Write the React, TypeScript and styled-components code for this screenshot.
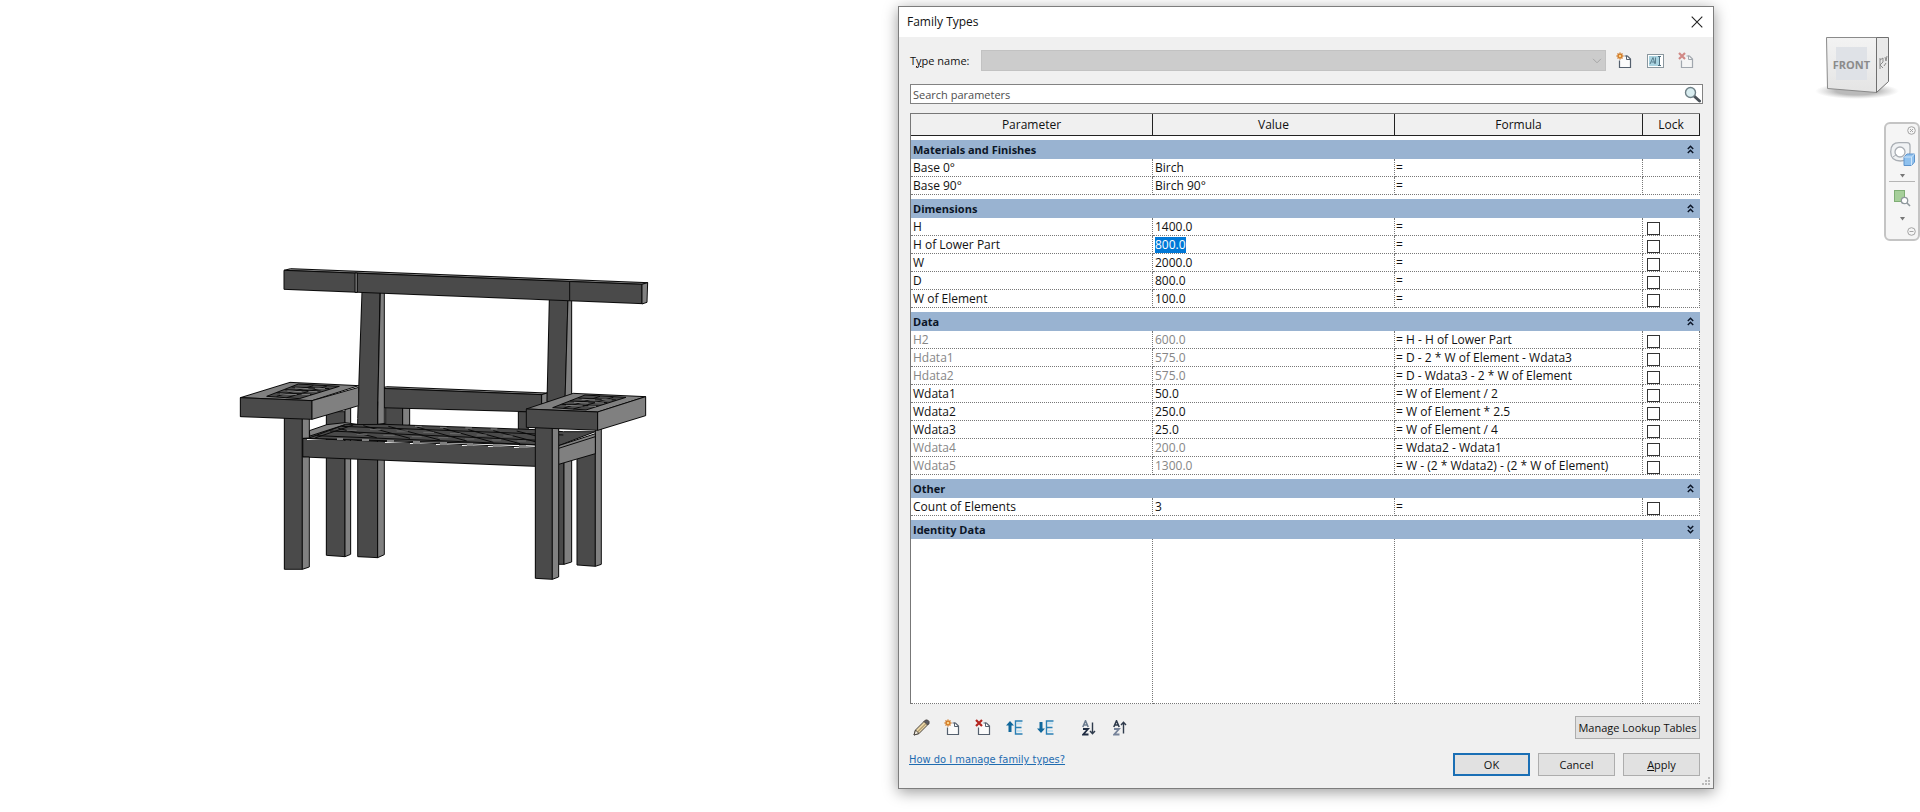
import React, { useEffect, useRef, useState } from "react";
import styled, { createGlobalStyle, css } from "styled-components";

const GlobalStyle = createGlobalStyle`
  *, *::before, *::after { box-sizing: border-box; }
  body {
    margin: 0;
    background: #fff;
    color: #111;
    font-family: "Open Sans", "Noto Sans", sans-serif;
    font-size: 12px;
    line-height: 16px;
  }
  button, input, select { font: inherit; color: inherit; }
`;

const Workspace = styled.main`
  display: grid;
  grid-template-columns: minmax(0, 1fr) minmax(600px, 816px) 206px;
  min-height: 100vh;
  overflow: hidden;
`;

const ModelView = styled.section`
  display: flex;
  align-items: center;
  justify-content: center;
`;

const ModelDrawing = styled.svg`
  flex: none;
  width: 430px;
  max-width: 100%;
`;

const Dialog = styled.section`
  align-self: start;
  display: flex;
  flex-direction: column;
  margin-top: 6px;
  border: 1px solid #7d7d7d;
  background: #f0f0f0;
  box-shadow: 0 3px 14px rgba(0, 0, 0, 0.4);
`;

const TitleBar = styled.header`
  display: flex;
  align-items: center;
  justify-content: space-between;
  height: 30px;
  padding: 0 6px 0 8px;
  background: #fff;
`;

const Title = styled.h1`
  margin: 0;
  font-size: 12px;
  font-weight: 400;
`;

const IconButton = styled.button`
  display: inline-flex;
  align-items: center;
  justify-content: center;
  width: 20px;
  height: 20px;
  padding: 0;
  border: 0;
  background: none;
`;

const TypeRow = styled.div`
  display: flex;
  align-items: center;
  gap: 8px;
  height: 21px;
  margin: 13px 17px 0 11px;
`;

const TypeLabel = styled.label`
  flex: none;
  width: 63px;
  font-size: 11px;
  white-space: nowrap;
`;

const TypeTools = styled.div`
  display: flex;
  gap: 11px;
`;

const TypeSelect = styled.div`
  position: relative;
  flex: 1;
  height: 21px;

  select {
    display: block;
    width: 100%;
    height: 100%;
    appearance: none;
    border: 1px solid #c2c2c2;
    border-radius: 0;
    background: #ccc;
    opacity: 1;
  }
  svg {
    position: absolute;
    top: 8px;
    right: 4px;
    pointer-events: none;
  }
`;

const SearchBox = styled.div`
  display: flex;
  align-items: center;
  height: 20px;
  margin: 13px 10px 0 11px;
  border: 1px solid #828282;
  background: #fff;

  input {
    flex: 1;
    height: 18px;
    padding: 0 2px;
    border: 0;
    outline: 0;
    background: none;
    font-size: 11px;
  }
  input::placeholder { color: #4e4e4e; opacity: 1; }
`;

const GridFrame = styled.div`
  margin: 9px 13px 0 11px;
  border: 1px solid #777;
  border-width: 1px 0 0 1px;
  background: #fff;
`;

const Grid = styled.table`
  width: 100%;
  table-layout: fixed;
  border-collapse: separate;
  border-spacing: 0;
`;

const ValueCol = styled.col``;
const FormulaCol = styled.col`width: 248px;`;
const LockCol = styled.col`width: 57px;`;

const HeadCell = styled.th`
  height: 22px;
  padding: 0;
  border-right: 1px solid #222;
  border-bottom: 1px solid #222;
  background: #f0f0f0;
  font-weight: 400;
  text-align: center;
`;

const GroupCell = styled.th`
  height: 23px;
  padding: 0;
  border-top: 4px solid #fff;
  background: #99b3d1;
  text-align: left;
`;

const GroupBar = styled.div`
  display: flex;
  align-items: center;
  justify-content: space-between;
  height: 19px;
  padding: 0 0 0 2px;
  color: #0b1526;
  font-size: 11px;
  font-weight: 700;
  line-height: 16px;
`;

const dots = "1px dotted #777";

const Cell = styled.td<{ $muted?: boolean }>`
  height: 18px;
  padding: 0 0 0 2px;
  border-right: ${dots};
  border-bottom: ${dots};
  line-height: 16px;
  white-space: nowrap;
  overflow: hidden;
  color: ${(p) => (p.$muted ? "#868686" : "inherit")};
`;

const FormulaCell = styled(Cell)`
  padding-left: 1px;
`;

const LockCell = styled(Cell)`
  padding: 3px 0 0 4px;
`;

const FillCell = styled(Cell)`
  height: 165px;
`;

const ValueInput = styled.input<{ $muted?: boolean }>`
  display: block;
  width: 100%;
  height: 16px;
  margin: 0;
  padding: 0;
  border: 0;
  outline: 0;
  background: none;
  color: ${(p) => (p.$muted ? "#868686" : "inherit")};
  caret-color: transparent;

  &::selection { background: #0078d7; color: #fff; }
`;

const LockBox = styled.input`
  display: block;
  appearance: none;
  width: 13px;
  height: 13px;
  margin: 0;
  border: 1px solid #333;
  background: #fff;
`;

const Footer = styled.footer`
  display: grid;
  grid-template-columns: 1fr auto;
  row-gap: 14px;
  padding: 12px 13px 12px 10px;
`;

const Toolbar = styled.div`
  display: flex;
  align-items: center;
  gap: 11px;
  padding-left: 2px;
`;

const ToolGap = styled.span`
  width: 2px;
`;

const Actions = styled.div`
  display: flex;
  justify-content: flex-end;
  gap: 8px;
`;

const PushButton = styled.button<{ $wide?: boolean; $primary?: boolean }>`
  width: ${(p) => (p.$wide ? 125 : 77)}px;
  height: 23px;
  padding: 0;
  border: 1px solid #adadad;
  background: #e1e1e1;
  font-size: 11px;
  line-height: 19px;
  white-space: nowrap;
  ${(p) =>
    p.$primary &&
    css`
      border: 2px solid #1a6fb5;
    `}
`;

const HelpLink = styled.a`
  justify-self: start;
  align-self: start;
  color: #1f6cb0;
  font-family: "DejaVu Sans Condensed", "DejaVu Sans", sans-serif;
  font-stretch: condensed;
  font-size: 11px;
  line-height: 13px;
`;

const Grip = styled.svg`
  position: absolute;
  right: 2px;
  bottom: 2px;
`;

const GripAnchor = styled.div`
  position: relative;
`;

const ViewTools = styled.aside`
  display: flex;
  flex-direction: column;
  align-items: flex-end;
  padding-top: 32px;
`;

const CubeButton = styled.button`
  width: 96px;
  height: 76px;
  margin: 0 18px 14px 0;
  padding: 0;
  border: 0;
  background: none;
`;

const NavBar = styled.nav`
  display: flex;
  flex-direction: column;
  align-items: center;
  width: 36px;
  height: 119px;
  border: 2px solid #c4c4c4;
  border-radius: 6px;
  background: #f5f5f5;
`;

const NavButton = styled.button<{ $h: number; $corner?: boolean }>`
  display: flex;
  align-items: center;
  justify-content: center;
  align-self: ${(p) => (p.$corner ? "flex-end" : "center")};
  width: ${(p) => (p.$corner ? 14 : 28)}px;
  height: ${(p) => p.$h}px;
  padding: 0;
  border: 0;
  background: none;
`;

const NavRule = styled.hr`
  width: 26px;
  margin: 0;
  border: 0;
  border-top: 1px solid #b5b5b5;
`;

type Row = { name: string; value: string; formula: string; muted?: boolean; active?: boolean };
type Group = { title: string; lock: boolean; open: boolean; rows: Row[] };

const groups: Group[] = [
  {
    title: "Materials and Finishes",
    lock: false,
    open: true,
    rows: [
      { name: "Base 0°", value: "Birch", formula: "" },
      { name: "Base 90°", value: "Birch 90°", formula: "" },
    ],
  },
  {
    title: "Dimensions",
    lock: true,
    open: true,
    rows: [
      { name: "H", value: "1400.0", formula: "" },
      { name: "H of Lower Part", value: "800.0", formula: "", active: true },
      { name: "W", value: "2000.0", formula: "" },
      { name: "D", value: "800.0", formula: "" },
      { name: "W of Element", value: "100.0", formula: "" },
    ],
  },
  {
    title: "Data",
    lock: true,
    open: true,
    rows: [
      { name: "H2", value: "600.0", formula: "H - H of Lower Part", muted: true },
      { name: "Hdata1", value: "575.0", formula: "D - 2 * W of Element - Wdata3", muted: true },
      { name: "Hdata2", value: "575.0", formula: "D - Wdata3 - 2 * W of Element", muted: true },
      { name: "Wdata1", value: "50.0", formula: "W of Element / 2" },
      { name: "Wdata2", value: "250.0", formula: "W of Element * 2.5" },
      { name: "Wdata3", value: "25.0", formula: "W of Element / 4" },
      { name: "Wdata4", value: "200.0", formula: "Wdata2 - Wdata1", muted: true },
      { name: "Wdata5", value: "1300.0", formula: "W - (2 * Wdata2) - (2 * W of Element)", muted: true },
    ],
  },
  {
    title: "Other",
    lock: true,
    open: true,
    rows: [{ name: "Count of Elements", value: "3", formula: "" }],
  },
  { title: "Identity Data", lock: true, open: false, rows: [] },
];

const DARK = "#4a4a4a";
const LIGHT = "#808080";

/* Seat slat ends that show along the front edge. */
const slatEnds = [320, 396, 472, 550, 630, 710, 790, 868];

function Bench() {
  const d = { fill: DARK };
  const l = { fill: LIGHT };
  return (
    <ModelDrawing viewBox="234 221 430 370" role="img" aria-label="Bench model">
      <g
        transform="translate(230 255) scale(.33333)"
        stroke="#0a0a0a"
        strokeWidth="3"
        strokeLinejoin="round"
        shapeRendering="crispEdges"
      >
        {/* rear legs */}
        <path {...d} d="M289 470H345V905L289 901Z" />
        <path {...l} d="M345 455H362V898L345 905Z" />
        <path {...d} d="M467 455H518V513H467Z" />
        <path {...l} d="M518 458H539V510L518 515Z" />
        <path {...d} d="M865 470H895V530H865Z" />
        <path {...d} d="M980 600H1002V928L980 928Z" />
        <path {...l} d="M1002 600H1025V921L1002 928Z" />
        <path {...d} d="M1041 560H1096V934L1041 930Z" />
        <path {...l} d="M1096 520H1114V928L1096 934Z" />
        {/* lower back rail */}
        <path {...l} d="M452 400L470 395L952 414L935 419Z" />
        <path {...d} d="M452 400L935 419V471L890 470L452 458Z" />
        <path {...l} d="M935 419L952 414V460H935Z" />
        {/* uprights */}
        <path {...d} d="M396 108L450 112L443 470L443 908L383 905V490Z" />
        <path {...l} d="M451 112H463V899L443 908V470Z" />
        <path d="M443 440V508L466 505" fill="none" />
        <path {...d} d="M958 130L1014 132L1005 440H951Z" />
        <path {...l} d="M1014 132H1025V440H1005Z" />
        {/* seat */}
        <path {...l} d="M238 527L290 509L345 503L383 508L240 550Z" />
        <path {...d} d="M218 550L345 509L465 508L920 524L1000 530L1096 530L986 572Z" />
        <g fill="none">
          <path d="M335 514L1000 540M300 528L930 556M260 542L915 569" />
          <path d="M325 520L440 548M400 512L540 550M475 514L630 555M560 516L710 558M640 520L790 562M715 524L870 566M790 527L915 560M860 528L930 546" />
          <path d="M240 548L345 509M255 549L370 510" />
        </g>
        <g fill="none" stroke="#6c6c6c">
          <path d="M350 526h30M420 524h32M500 528h34M580 532h32M660 536h32M740 540h30M820 543h28M380 538h32M460 541h34M545 545h30M625 548h30M705 552h28M785 555h28M862 558h26" />
          <path stroke={LIGHT} d="M555 514h20M630 517h20M706 519h20M782 522h20" />
        </g>
        <g fill={LIGHT} stroke="none">
          {slatEnds.map((x) => (
            <path key={x} d={`M${x} ${Math.round(548 + (x - 320) * 0.042)}h20v5h-20z`} />
          ))}
        </g>
        <path {...d} stroke="none" d="M218 553L915 580V634L218 606Z" />
        <path d="M218 550L915 577M915 634L218 606V550" fill="none" />
        <g fill={LIGHT} stroke="none">
          {slatEnds.map((x) => (
            <path key={x} d={`M${x} ${Math.round(551 + (x - 320) * 0.042)}h20v5h-20z`} />
          ))}
        </g>
        <path {...l} d="M986 572L1096 536V596L986 628Z" />
        <path d="M986 580L1096 545" fill="none" />
        {/* top rail */}
        <path {...l} d="M162 46L182 41L1253 83L1236 88Z" />
        <path {...d} d="M162 46L1236 88V146L162 103Z" />
        <path {...l} d="M1236 88L1253 83L1251 142L1236 147Z" />
        <path {...l} d="M375 54H382V112H375Z" />
        <path d="M1019 79V136" fill="none" />
        {/* left front leg and arm rest */}
        <path {...d} d="M163 485H217V943H163Z" />
        <path {...l} d="M217 485H238V549L218 550V606H238V936L217 943Z" />
        <path {...l} d="M31 428L180 382L386 392L246 437Z" />
        <path {...d} d="M110 424L205 387L328 394L208 431Z" />
        <g fill="none">
          <path d="M140 413L245 418M165 404L272 408M185 396L298 401M140 424L250 392M170 428L290 394" />
          <path stroke={LIGHT} d="M150 417L200 419M172 408L215 410M195 399L235 401M255 400L285 401M235 409L262 410M215 418L240 419" />
        </g>
        <path {...d} d="M31 428L246 437V493L31 485Z" />
        <path {...l} d="M246 437L386 397V452L246 493Z" />
        {/* right front leg and arm rest */}
        <path {...d} d="M916 515H967V973L916 970Z" />
        <path {...l} d="M967 515H986V966L967 973Z" />
        <path {...l} d="M889 462L1030 415L1247 425L1103 471Z" />
        <path {...d} d="M968 458L1065 420L1188 427L1068 465Z" />
        <g fill="none">
          <path d="M995 448L1105 453M1020 438L1132 443M1045 429L1158 435M1000 460L1110 424M1030 462L1150 427" />
          <path stroke={LIGHT} d="M1008 451L1058 453M1032 442L1075 444M1055 433L1095 435M1115 434L1145 435M1095 443L1122 444M1075 453L1098 454" />
        </g>
        <path {...d} d="M889 462L1103 471V526L889 517Z" />
        <path {...l} d="M1103 471L1247 425V482L1103 526Z" />
      </g>
    </ModelDrawing>
  );
}

function CloseIcon() {
  return (
    <svg width="12" height="12" viewBox="0 0 12 12" stroke="#222" strokeWidth="1.1">
      <path d="M.7.7l10.6 10.6M11.3.7L.7 11.3" />
    </svg>
  );
}

function PageShape() {
  return (
    <>
      <path
        d="M3.500 8.500V15.500H14.500V7L11.500 4H8.500"
        fill="#fbfbfb"
        stroke="#55606e"
        strokeWidth="1.200"
      />
      <path d="M10.500 3.500V7.500H14.500" fill="none" stroke="#55606e" />
    </>
  );
}

function NewIcon() {
  return (
    <svg width="16" height="17" viewBox="0 0 16 17">
      <PageShape />
      <path
        d="M4 .5v7M.5 4h7M1.500 1.500l5 5M6.500 1.500l-5 5"
        stroke="#d07a28"
        strokeWidth="1.400"
      />
      <circle cx="4" cy="4" r="1.600" fill="#ffe09a" stroke="#d9822b" />
    </svg>
  );
}

function DeleteIcon({ faded = false }: { faded?: boolean }) {
  return (
    <svg width="16" height="17" viewBox="0 0 16 17" opacity={faded ? 0.5 : 1}>
      <PageShape />
      <path d="M1 1l6 6M7 1L1 7" stroke="#b3251f" strokeWidth="2.200" />
    </svg>
  );
}

function RenameIcon() {
  return (
    <svg width="17" height="14" viewBox="0 0 17 14">
      <rect x=".5" y=".5" width="16" height="13" fill="#fff" stroke="#8a979e" />
      <rect x="2" y="2" width="10" height="10" fill="#a9d3e0" />
      <path d="M3 10L6 3.500L8 10M4.500 8h3M8.500 3.500v6" fill="none" stroke="#5b7f8e" />
      <path d="M11 2.500h3M12.500 2.500v9M11 11.500h3" stroke="#4c6f80" />
    </svg>
  );
}

function SearchIcon() {
  return (
    <svg width="17" height="17" viewBox="0 0 17 17">
      <path d="M10 10l5.500 5" stroke="#4a5158" strokeWidth="3" strokeLinecap="round" />
      <circle cx="6.500" cy="6.500" r="5" fill="#d9edf0" stroke="#6f8087" strokeWidth="1.400" />
    </svg>
  );
}

function PencilIcon() {
  return (
    <svg width="17" height="17" viewBox="0 0 17 17" stroke="#4a4540">
      <path d="M1 16l1.500-5L11.500 2 15 5.500 6 14.500z" fill="#e9d3a2" />
      <path d="M11 2.500L12.500 1h2L16 2.500v2L14.500 6z" fill="#5b5b62" />
      <path d="M1 16l1.500-5L6 14.500z" fill="#f6efe2" />
      <path d="M4.500 13L13 4.500" stroke="#8d7b55" />
    </svg>
  );
}

function MoveIcon({ down = false }: { down?: boolean }) {
  return (
    <svg width="17" height="15" viewBox="0 0 17 15">
      <path
        d="M4 1L8 5.500H5.500V12H2.500V5.500H0z"
        fill="#11689c"
        transform={down ? "translate(0 14) scale(1 -1)" : undefined}
      />
      <path d="M11 3.500h5M11 11h5" stroke="#c3e2f2" strokeWidth="2" />
      <path d="M16.500 1H9.500V14H16.500M9.500 7.500H15.500" fill="none" stroke="#2a7fb4" strokeWidth="1.400" />
    </svg>
  );
}

function SortIcon({ up = false }: { up?: boolean }) {
  return (
    <svg width="14" height="16" viewBox="0 0 14 16" fill="none" stroke={up ? "#2f3b4c" : "#6d7d90"}>
      <path d="M.8 7L3.500.8 6.200 7M1.800 5h3.400" strokeWidth="1.600" />
      <path
        d="M1 9h5L1.200 14.500H6.500"
        strokeWidth="1.800"
        stroke={up ? "#76839a" : "#1f2c42"}
      />
      <path
        d="M10.500 2.500V13.500M8 11L10.500 13.700 13 11"
        stroke="#2f3b4c"
        strokeWidth="1.400"
        transform={up ? "translate(0 16) scale(1 -1)" : undefined}
      />
    </svg>
  );
}

function DoubleChevron({ open }: { open: boolean }) {
  return (
    <svg width="7" height="9" viewBox="0 0 7 9" fill="none" stroke="#0b1526" strokeWidth="1.500">
      <path
        d={open ? "M.8 4L3.500 1.300 6.200 4M.8 8L3.500 5.300 6.200 8" : "M.8 1L3.500 3.700 6.200 1M.8 5L3.500 7.700 6.200 5"}
      />
    </svg>
  );
}

function ViewCube() {
  return (
    <svg width="96" height="76" viewBox="1806 32 96 76">
      <defs>
        <radialGradient id="cubeShadow">
          <stop offset="0.5" stopColor="#8c8c8c" stopOpacity="0.6" />
          <stop offset="1" stopColor="#aaa" stopOpacity="0" />
        </radialGradient>
        <linearGradient id="cubeFace" x1="0" y1="0" x2="0" y2="1">
          <stop offset="0" stopColor="#f3f3f3" />
          <stop offset="1" stopColor="#e4e4e4" />
        </linearGradient>
      </defs>
      <ellipse cx="1857" cy="91" rx="42" ry="8" fill="url(#cubeShadow)" />
      <path d="M1826.500 37.500H1876.500V92.500L1827.500 88.500Z" fill="url(#cubeFace)" stroke="#8a8a8a" />
      <path d="M1876.500 37.500H1888.500V81.500L1876.500 92.500Z" fill="#e9e9e9" stroke="#6f6f6f" />
      <rect x="1836" y="47" width="31" height="33" fill="#dfe2e7" />
      <text
        x="1851.500"
        y="69"
        textAnchor="middle"
        fontFamily="Open Sans, sans-serif"
        fontSize="11"
        fontWeight="700"
        fill="#8b8b8b"
      >
        FRONT
      </text>
      <path d="M1880 58v11M1880 60l3-2v4l-3 3 3 3M1885 57l1 4 1-5M1884 66l2-3" fill="none" stroke="#8b8b8b" />
    </svg>
  );
}

function CornerIcon({ minus = false }: { minus?: boolean }) {
  return (
    <svg width="9" height="9" viewBox="0 0 9 9" fill="none" stroke="#a4a4a4">
      <circle cx="4.500" cy="4.500" r="3.800" />
      <path d={minus ? "M2.500 4.500h4" : "M3 3l3 3M6 3L3 6"} />
    </svg>
  );
}

function WheelIcon() {
  return (
    <svg width="25" height="24" viewBox="0 0 25 24">
      <path
        d="M9.500.7H17q3 0 3 3V10q0 9-9.500 9-9.800 0-9.800-9.300T9.500.7z"
        fill="#f0f2f4"
        stroke="#a9aeb4"
        strokeWidth="1.300"
      />
      <circle cx="10" cy="10" r="5" fill="#fff" stroke="#a9aeb4" strokeWidth="1.300" />
      <path d="M3 15l3.500-2.500M15 13l2 1.500" stroke="#a9aeb4" />
      <path d="M14 15l3-3h7.500v8l-3 3.500H14z" fill="#8fc1ee" stroke="#5e93cb" />
      <path d="M14 15h7.500v8.500M21.500 15l3-3" fill="none" stroke="#cfe5fa" />
    </svg>
  );
}

function ZoomRegionIcon() {
  return (
    <svg width="17" height="17" viewBox="0 0 17 17">
      <rect x=".5" y=".5" width="10" height="11" fill="#a6cf9a" stroke="#7fae75" />
      <circle cx="10.500" cy="10.500" r="3.200" fill="#fff" stroke="#8f989d" strokeWidth="1.300" />
      <path d="M13 13l3 3" stroke="#8f989d" strokeWidth="1.600" />
    </svg>
  );
}

function DownTriangle() {
  return (
    <svg width="5" height="4" viewBox="0 0 5 4">
      <path d="M0 0h5L2.500 3.500z" fill="#777" />
    </svg>
  );
}

function ParameterRow({ row, lock }: { row: Row; lock: boolean }) {
  const [value, setValue] = useState(row.value);
  const field = useRef<HTMLInputElement>(null);

  useEffect(() => {
    if (row.active && field.current) {
      field.current.focus();
      field.current.select();
    }
  }, [row.active]);

  return (
    <tr>
      <Cell $muted={row.muted}>{row.name}</Cell>
      <Cell>
        <ValueInput
          ref={field}
          type="text"
          aria-label={`${row.name} value`}
          value={value}
          readOnly={row.muted}
          $muted={row.muted}
          onChange={(e) => setValue(e.target.value)}
        />
      </Cell>
      <FormulaCell>{row.formula ? `= ${row.formula}` : "="}</FormulaCell>
      <LockCell>{lock && <LockBox type="checkbox" aria-label={`Lock ${row.name}`} />}</LockCell>
    </tr>
  );
}

function ParameterTable() {
  return (
    <GridFrame>
      <Grid>
        <colgroup>
          <ValueCol />
          <ValueCol />
          <FormulaCol />
          <LockCol />
        </colgroup>
        <thead>
          <tr>
            {["Parameter", "Value", "Formula", "Lock"].map((name) => (
              <HeadCell key={name} scope="col">
                {name}
              </HeadCell>
            ))}
          </tr>
        </thead>
        {groups.map((group) => (
          <tbody key={group.title}>
            <tr>
              <GroupCell colSpan={4} scope="rowgroup">
                <GroupBar>
                  {group.title}
                  <IconButton type="button" aria-label={`Toggle ${group.title}`}>
                    <DoubleChevron open={group.open} />
                  </IconButton>
                </GroupBar>
              </GroupCell>
            </tr>
            {group.rows.map((row) => (
              <ParameterRow key={row.name} row={row} lock={group.lock} />
            ))}
          </tbody>
        ))}
        <tbody>
          <tr>
            <FillCell />
            <FillCell />
            <FillCell />
            <FillCell />
          </tr>
        </tbody>
      </Grid>
    </GridFrame>
  );
}

function FamilyTypesDialog() {
  return (
    <Dialog role="dialog" aria-labelledby="dialog-title">
      <TitleBar>
        <Title id="dialog-title">Family Types</Title>
        <IconButton type="button" aria-label="Close">
          <CloseIcon />
        </IconButton>
      </TitleBar>
      <TypeRow>
        <TypeLabel htmlFor="type-name">
          T<u>y</u>pe name:
        </TypeLabel>
        <TypeSelect>
          <select id="type-name" disabled />
          <svg width="10" height="6" viewBox="0 0 10 6" fill="none" stroke="#a5a5a5">
            <path d="M1 .8l4 4 4-4" />
          </svg>
        </TypeSelect>
        <TypeTools>
          <IconButton type="button" aria-label="New type">
            <NewIcon />
          </IconButton>
          <IconButton type="button" aria-label="Rename type" disabled>
            <RenameIcon />
          </IconButton>
          <IconButton type="button" aria-label="Delete type" disabled>
            <DeleteIcon faded />
          </IconButton>
        </TypeTools>
      </TypeRow>
      <SearchBox>
        <input type="text" aria-label="Search parameters" placeholder="Search parameters" />
        <IconButton type="button" aria-label="Search">
          <SearchIcon />
        </IconButton>
      </SearchBox>
      <ParameterTable />
      <Footer>
        <Toolbar>
          <IconButton type="button" aria-label="Edit parameter">
            <PencilIcon />
          </IconButton>
          <IconButton type="button" aria-label="New parameter">
            <NewIcon />
          </IconButton>
          <IconButton type="button" aria-label="Delete parameter">
            <DeleteIcon />
          </IconButton>
          <IconButton type="button" aria-label="Move up">
            <MoveIcon />
          </IconButton>
          <IconButton type="button" aria-label="Move down">
            <MoveIcon down />
          </IconButton>
          <ToolGap />
          <IconButton type="button" aria-label="Sort ascending">
            <SortIcon />
          </IconButton>
          <IconButton type="button" aria-label="Sort descending">
            <SortIcon up />
          </IconButton>
        </Toolbar>
        <Actions>
          <PushButton type="button" $wide>
            Mana<u>g</u>e Lookup Tables
          </PushButton>
        </Actions>
        <HelpLink href="#help">How do I manage family types?</HelpLink>
        <Actions>
          <PushButton type="button" $primary>
            OK
          </PushButton>
          <PushButton type="button">Cancel</PushButton>
          <PushButton type="button">
            <u>A</u>pply
          </PushButton>
        </Actions>
      </Footer>
      <GripAnchor>
        <Grip width="9" height="9" viewBox="0 0 9 9" fill="#b9b9b9" aria-hidden="true">
          <path d="M6 0h2v2H6zM3 3h2v2H3zM6 3h2v2H6zM0 6h2v2H0zM3 6h2v2H3zM6 6h2v2H6z" />
        </Grip>
      </GripAnchor>
    </Dialog>
  );
}

function NavigationBar() {
  return (
    <NavBar aria-label="Navigation bar">
      <NavButton type="button" $h={13} $corner aria-label="Close navigation bar">
        <CornerIcon />
      </NavButton>
      <NavButton type="button" $h={34} aria-label="Steering wheel">
        <WheelIcon />
      </NavButton>
      <NavButton type="button" $h={10} aria-label="Steering wheel options">
        <DownTriangle />
      </NavButton>
      <NavRule />
      <NavButton type="button" $h={32} aria-label="Zoom in region">
        <ZoomRegionIcon />
      </NavButton>
      <NavButton type="button" $h={9} aria-label="Zoom options">
        <DownTriangle />
      </NavButton>
      <NavButton type="button" $h={16} $corner aria-label="Customize navigation bar">
        <CornerIcon minus />
      </NavButton>
    </NavBar>
  );
}

export default function App() {
  return (
    <>
      <GlobalStyle />
      <Workspace>
        <ModelView>
          <Bench />
        </ModelView>
        <FamilyTypesDialog />
        <ViewTools>
          <CubeButton type="button" aria-label="View cube">
            <ViewCube />
          </CubeButton>
          <NavigationBar />
        </ViewTools>
      </Workspace>
    </>
  );
}
